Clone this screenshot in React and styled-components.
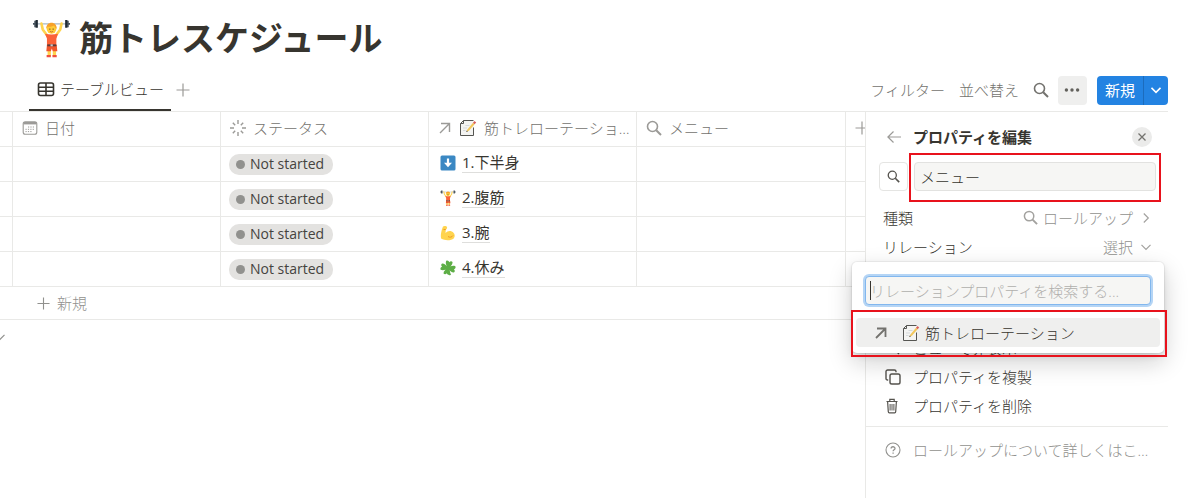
import { useState } from "react";
import styled, { createGlobalStyle, css } from "styled-components";

const tasks = [
  { id: 1, icon: "down", name: "1.下半身" },
  { id: 2, icon: "lifter", name: "2.腹筋" },
  { id: 3, icon: "muscle", name: "3.腕" },
  { id: 4, icon: "clover", name: "4.休み" },
];

/* ---------- icons ---------- */

const Line = ({ size = 16, box = 16, width = 1.3, children }) => (
  <svg
    width={size}
    height={size}
    viewBox={`0 0 ${box} ${box}`}
    fill="none"
    stroke="currentColor"
    strokeWidth={width}
    aria-hidden="true"
  >
    {children}
  </svg>
);

const SearchIcon = ({ size = 16, width = 1.6 }) => (
  <Line size={size} width={width}>
    <circle cx="6.5" cy="6.5" r="5" />
    <path d="M10.2 10.2L15 15" strokeWidth={width + 0.4} />
  </Line>
);

const PlusIcon = ({ size = 14 }) => (
  <Line size={size} box={14} width={1.2}>
    <path d="M7 .5v13M.5 7h13" />
  </Line>
);

const TableIcon = () => (
  <Line size={18} box={18} width={1.6}>
    <rect x="1.5" y="3" width="15" height="12.5" rx="2" />
    <path d="M1.5 7.200h15M1.5 11.300h15M9 3v12.500" />
  </Line>
);

const CalendarIcon = () => (
  <Line width={1.1}>
    <rect x="1.2" y="1.7" width="13.6" height="12.6" rx="2" />
    <path d="M1.500 3.200h13" strokeWidth="2.400" />
    <path
      d="M6 7h7M3.500 9.300h9.500M3.500 11.600h7"
      strokeWidth="1"
      strokeDasharray="1.200 1.200"
    />
  </Line>
);

const StatusIcon = () => (
  <Line width={1.4}>
    <path d="M8 0v4M8 12v4M0 8h4M12 8h4M2.8 2.8l2.4 2.4M10.8 10.8l2.4 2.4M13.2 2.8l-2.4 2.4M5.2 10.8l-2.4 2.4" />
  </Line>
);

const ArrowUpRight = ({ width = 1.4 }) => (
  <Line size={14} box={14} width={width}>
    <path d="M2 12L11.500 2.500M3 2.500h8.500V11" />
  </Line>
);

const ArrowLeft = () => (
  <Line size={14} box={14} width={1.2}>
    <path d="M.7 7H14M6.500 1.500L.9 7l5.600 5.500" />
  </Line>
);

const Chevron = ({ dir = "down", width = 1.2, size = 10 }) => (
  <Line size={size} box={10} width={width}>
    <path d={dir === "down" ? "M.5 2.8L5 7.3l4.5-4.5" : "M2.8.5L7.3 5 2.8 9.5"} />
  </Line>
);

const CloseIcon = () => (
  <Line size={8} box={8} width={1.3}>
    <path d="M.5.5l7 7M7.5.5l-7 7" />
  </Line>
);

const DotsIcon = () => (
  <svg width="16" height="4" viewBox="0 0 16 4" fill="currentColor">
    <circle cx="2.4" cy="2" r="1.7" />
    <circle cx="8" cy="2" r="1.7" />
    <circle cx="13.6" cy="2" r="1.7" />
  </svg>
);

const EyeOffIcon = () => (
  <Line width={1.4}>
    <path d="M1 8c3-5 11-5 14 0-3 5-11 5-14 0zM2 2l12 12" />
    <circle cx="8" cy="8" r="2" />
  </Line>
);

const CopyIcon = () => (
  <Line width={1.4}>
    <rect x="5" y="5" width="10" height="10" rx="1.8" />
    <path d="M3.200 11H2.600A1.600 1.600 0 0 1 1 9.400V2.600A1.600 1.600 0 0 1 2.600 1h6.800A1.600 1.600 0 0 1 11 2.600v.7" />
  </Line>
);

const TrashIcon = () => (
  <Line width={1.2}>
    <path d="M1.500 3.500h11M4.800 3.300V1.300h4.400v2M2.600 3.500l.7 10.300q.1 1 1 1h5.400q.9 0 1-1l.7-10.300" />
    <path d="M5.100 6v6.500M7 6v6.500M8.900 6v6.500" strokeWidth="1" />
  </Line>
);

const HelpIcon = () => (
  <Line width={1.1}>
    <circle cx="8" cy="8" r="7" />
    <path
      d="M6.100 6.600c0-2.500 3.900-2.400 3.900-.2 0 1.400-1.900 1.400-1.900 2.900M8.100 10.400v1.300"
      strokeWidth="1.300"
    />
  </Line>
);

const Lifter = ({ size }) => (
  <svg width={size} height={size} viewBox="0 0 114 120">
    <path d="M8 15h98" stroke="#a9b8c4" strokeWidth="4" />
    <path d="M4 5h5v20H4zM105 5h5v20h-5z" fill="#45515c" />
    <path d="M8 3h7v24H8zM99 3h7v24h-7z" fill="#202b35" />
    <path d="M0 12h6v6H0zM108 12h6v6h-6z" fill="#45515c" />
    <path
      d="M26 14l4 18 16 22M88 14l-4 18-16 22"
      stroke="#ffd44e"
      strokeWidth="8"
      strokeLinecap="round"
      strokeLinejoin="round"
      fill="none"
    />
    <path d="M45 90h10v24H45zM61 90h10v24H61z" fill="#ffd44e" />
    <path d="M37 45q20 5 40 0l-5 16v22H43V60z" fill="#fb6238" />
    <path d="M43 80h30l2 19H61l-3-8-3 8H41z" fill="#f0552c" />
    <path d="M44 78h28v6H44z" fill="#5a3b3b" />
    <path d="M54 78h7v6h-7z" fill="#c9ccd0" />
    <path d="M42 118v-7h13v7zM60 118v-7h13v7z" fill="#f0503c" />
    <circle cx="57" cy="30" r="15" fill="#ffcb38" />
    <path d="M41 30c-2-25 34-25 32 0-5-3-7-9-8-10-7 5-16 3-20 4-2 2-2 4-4 6z" fill="#f7a12a" />
    <circle cx="52" cy="31" r="2" fill="#5b3a1c" />
    <circle cx="62" cy="31" r="2" fill="#5b3a1c" />
    <path d="M52 38q5 4 10 0" stroke="#a6521b" strokeWidth="2" fill="none" />
  </svg>
);

const Memo = () => (
  <svg width="18" height="18" viewBox="0 0 18 18">
    <path d="M1.500 4.500l3-3h10v15h-13z" fill="#f4f4f2" />
    <path d="M4.500 1.500h10M14.500 8.500v8h-13V4.500l3-3v3h-3" fill="none" stroke="#555552" />
    <path d="M6.500 6.500h4M4 9h4M4 11.500h2.500" stroke="#d5d9dc" />
    <path d="M7.500 12.800l.9-2.400 5.600-6.700 1.600 1.500-5.700 6.600z" fill="#f2c75c" />
    <path d="M14 3.700l1.500-1.800 1.700 1.500-1.600 1.800z" fill="#d9605a" />
    <path d="M7.300 13l.5-1.500 1 1z" fill="#333" />
  </svg>
);

const DownSquare = () => (
  <svg width="16" height="16" viewBox="0 0 16 16">
    <rect x=".5" y=".5" width="15" height="15" rx="1.500" fill="#3b88c3" />
    <path d="M6.900 3.500h2.200v4.300H12L8 12.300 4 7.800h2.900z" fill="#fff" />
  </svg>
);

const Muscle = () => (
  <svg width="16" height="16" viewBox="0 0 16 16">
    <path
      d="M3 1.500C4 .6 6.500.8 7 2c.4 1.200-.2 2.200-1.200 2.500L5.500 8c1.600-1.700 4-2.500 6.200-1.500 3.300 1.400 3.800 5 2 6.900C11.500 15.600 5 15.800 1.300 13.800.2 11 1.400 5 3 1.500z"
      fill="#ffd44e"
    />
    <path d="M8 11.500c1.500 1.200 4 .8 5-1M3.500 4.600l2.200-.1" stroke="#ee9a25" fill="none" />
  </svg>
);

const Clover = () => (
  <svg width="16" height="16" viewBox="0 0 16 16">
    <path d="M8 8c0 3 .8 5 2.300 7.200" stroke="#4c9a35" strokeWidth="1.500" fill="none" />
    <path
      d="M8 8C5.500 6 4.200 3.500 4.800 1.200 6 .2 7.300.8 8 2c.7-1.200 2-1.800 3.200-.8C11.800 3.500 10.500 6 8 8zM8 8c2-2.500 4.500-3.800 6.800-3.200 1 1.200.4 2.500-.8 3.200 1.200.7 1.800 2 .8 3.200C12.500 11.800 10 10.500 8 8zM8 8c2.500 2 3.800 4.500 3.200 6.300-1.200.8-2.500.2-3.200-.9-.7 1.100-2 1.700-3.200.9C4.200 12.500 5.500 10 8 8zM8 8c-2 2.500-4.500 3.800-6.800 3.200C.2 10 .8 8.700 2 8 .8 7.300.2 6 1.200 4.800 3.500 4.200 6 5.500 8 8z"
      fill="#5dae46"
      transform="rotate(12 8 8)"
    />
  </svg>
);

const pageIcons = {
  down: <DownSquare />,
  lifter: <Lifter size={16} />,
  muscle: <Muscle />,
  clover: <Clover />,
};

/* ---------- page ---------- */

function App() {
  const [name, setName] = useState("メニュー");
  const [query, setQuery] = useState("");

  return (
    <Page>
      <GlobalStyle />
      <Title>
        <Lifter size={39} />
        筋トレスケジュール
      </Title>

      <Toolbar>
        <Tab>
          <TableIcon />
          テーブルビュー
        </Tab>
        <IconButton aria-label="ビューを追加">
          <PlusIcon />
        </IconButton>
        <Actions>
          <TextButton>フィルター</TextButton>
          <TextButton>並べ替え</TextButton>
          <IconButton aria-label="検索" $dark>
            <SearchIcon />
          </IconButton>
          <MoreButton aria-label="その他">
            <DotsIcon />
          </MoreButton>
          <NewGroup>
            <NewButton>新規</NewButton>
            <NewMenu aria-label="新規メニュー">
              <Chevron width={1.6} />
            </NewMenu>
          </NewGroup>
        </Actions>
      </Toolbar>

      <Content>
        <TableArea>
          <Table>
            <colgroup>
              <col width="13" />
              <col width="208" />
              <col width="208" />
              <col width="208" />
              <col width="209" />
              <col />
            </colgroup>
            <thead>
              <tr>
                <Th />
                <Th>
                  <Head>
                    <CalendarIcon />
                    <span>日付</span>
                  </Head>
                </Th>
                <Th>
                  <Head>
                    <StatusIcon />
                    <span>ステータス</span>
                  </Head>
                </Th>
                <Th>
                  <Head>
                    <ArrowUpRight />
                    <Memo />
                    <span>筋トレローテーション</span>
                  </Head>
                </Th>
                <Th>
                  <Head>
                    <SearchIcon />
                    <span>メニュー</span>
                  </Head>
                </Th>
                <Th>
                  <Head>
                    <PlusIcon />
                  </Head>
                </Th>
              </tr>
            </thead>
            <tbody>
              {tasks.map((task) => (
                <tr key={task.id}>
                  <Td />
                  <Td />
                  <Td>
                    <Status>Not started</Status>
                  </Td>
                  <Td>
                    <Relation href="#">
                      {pageIcons[task.icon]}
                      <span>{task.name}</span>
                    </Relation>
                  </Td>
                  <Td />
                  <Td />
                </tr>
              ))}
            </tbody>
          </Table>
          <AddRow>
            <PlusIcon size={13} />
            新規
          </AddRow>
          <Calc>
            <Chevron />
          </Calc>
        </TableArea>

        <Panel>
          <PanelHeader>
            <IconButton aria-label="戻る">
              <ArrowLeft />
            </IconButton>
            <h2>プロパティを編集</h2>
            <CloseButton aria-label="閉じる">
              <CloseIcon />
            </CloseButton>
          </PanelHeader>
          <NameRow>
            <IconBox aria-label="アイコン">
              <SearchIcon size={13} />
            </IconBox>
            <NameField>
              <NameInput
                aria-label="プロパティ名"
                value={name}
                onChange={(e) => setName(e.target.value)}
              />
              <Highlight />
            </NameField>
          </NameRow>
          <Setting>
            種類
            <Value>
              <SearchIcon size={15} />
              ロールアップ
              <Chevron dir="right" />
            </Value>
          </Setting>
          <Setting>
            リレーション
            <Value>
              選択
              <Chevron />
            </Value>
            <Popup>
              <Query
                aria-label="リレーションプロパティを検索"
                placeholder="リレーションプロパティを検索する..."
                value={query}
                autoFocus
                onChange={(e) => setQuery(e.target.value)}
              />
              <Option>
                <ArrowUpRight width={1.8} />
                <Memo />
                筋トレローテーション
              </Option>
              <OptionHighlight />
            </Popup>
          </Setting>
          <Menu>
            <MenuItem>
              <EyeOffIcon />
              <span>ビューで非表示</span>
            </MenuItem>
            <MenuItem>
              <CopyIcon />
              <span>プロパティを複製</span>
            </MenuItem>
            <MenuItem>
              <TrashIcon />
              <span>プロパティを削除</span>
            </MenuItem>
          </Menu>
          <Help>
            <MenuItem $muted>
              <HelpIcon />
              <span>ロールアップについて詳しくはこちら</span>
            </MenuItem>
          </Help>
        </Panel>
      </Content>
    </Page>
  );
}

export default App;

const GlobalStyle = createGlobalStyle`
  * {
    box-sizing: border-box;
  }
  body {
    margin: 0;
    background: #fff;
    color: #37352f;
    font-family: "Open Sans", "Noto Sans CJK JP", sans-serif;
    font-size: 15px;
    font-weight: 300;
    line-height: 20px;
  }
  button, input {
    font: inherit;
    color: inherit;
  }
  button {
    display: flex;
    align-items: center;
    padding: 0;
    border: none;
    background: none;
    cursor: pointer;
  }
  svg {
    flex-shrink: 0;
  }
`;

const Page = styled.div`
  min-height: 100vh;
  display: flex;
  flex-direction: column;
  overflow: hidden;
`;

const Title = styled.h1`
  display: flex;
  align-items: center;
  gap: 8px;
  margin: 0;
  padding: 16px 32px 0;
  font-size: 34px;
  font-weight: 700;
  line-height: 44px;
`;

const Toolbar = styled.div`
  display: flex;
  align-items: center;
  gap: 5px;
  height: 42px;
  margin-top: 9px;
  padding: 0 32px 0 29px;
`;

const Tab = styled.button`
  align-self: stretch;
  gap: 5px;
  padding: 0 7px 0 8px;
  border-bottom: 2px solid #37352f;
`;

const IconButton = styled.button`
  color: ${(p) => (p.$dark ? "#73726e" : "#9b9a97")};
`;

const Actions = styled.div`
  display: flex;
  align-items: center;
  gap: 14px;
  margin-left: auto;
`;

const TextButton = styled.button`
  color: #73726e;
`;

const MoreButton = styled.button`
  justify-content: center;
  width: 29px;
  height: 29px;
  margin: 0 -4px 0 -5px;
  border-radius: 4px;
  background: #efefee;
  color: #62615c;
`;

const NewGroup = styled.div`
  display: flex;
  height: 29px;
  overflow: hidden;
  border-radius: 4px;
  background: #2383e2;
  color: #fff;
`;

const NewButton = styled.button`
  padding: 0 8px;
  font-weight: 400;
`;

const NewMenu = styled.button`
  justify-content: center;
  width: 25px;
  border-left: 1px solid #1c6cbc;
`;

const Content = styled.div`
  flex: 1;
  display: flex;
  margin-right: 32px;
  border-top: 1px solid #e9e9e7;
`;

const TableArea = styled.div`
  flex: 1;
  min-width: 0;
  overflow: hidden;
`;

const Table = styled.table`
  width: 100%;
  table-layout: fixed;
  border-collapse: separate;
  border-spacing: 0;
`;

const cell = css`
  height: 35px;
  padding: 0 5px 0 8px;
  border-bottom: 1px solid #e9e9e7;
  border-right: 1px solid #e9e9e7;
  &:first-child {
    padding: 0;
  }
  &:last-child {
    padding-right: 0;
    border-right: none;
  }
`;

const Th = styled.th`
  ${cell}
  color: #73726e;
  font-weight: inherit;
  text-align: left;
  svg {
    color: #9b9a97;
  }
`;

const Head = styled.div`
  display: flex;
  align-items: center;
  gap: 7px;
  padding: 0 0 2px 1px;
  span {
    overflow: hidden;
    text-overflow: ellipsis;
    white-space: nowrap;
  }
`;

const Td = styled.td`
  ${cell}
`;

const Status = styled.span`
  display: flex;
  align-items: center;
  gap: 5px;
  width: fit-content;
  height: 21px;
  padding: 0 9px 0 7px;
  border-radius: 10px;
  background: #e3e2e0;
  color: #45433e;
  font-size: 14px;
  font-weight: 400;
  &::before {
    content: "";
    width: 9px;
    height: 9px;
    border-radius: 50%;
    background: #91918e;
  }
`;

const Relation = styled.a`
  display: flex;
  align-items: center;
  gap: 6px;
  padding: 0 0 3px 3px;
  color: inherit;
  font-weight: 400;
  text-decoration: none;
  span {
    border-bottom: 1px solid #dededc;
  }
`;

const AddRow = styled.button`
  gap: 7px;
  width: 100%;
  height: 33px;
  padding-left: 37px;
  border-bottom: 1px solid #e9e9e7;
  color: #91918e;
`;

const Calc = styled.div`
  margin: 6px 0 0 -5px;
  color: #91918e;
`;

const Panel = styled.aside`
  width: 303px;
  border-left: 1px solid #e9e9e7;
`;

const PanelHeader = styled.div`
  display: flex;
  align-items: center;
  gap: 12px;
  padding: 15px 16px 0 21px;
  h2 {
    flex: 1;
    margin: 0;
    font-size: 15px;
    font-weight: 700;
    line-height: 20px;
  }
`;

const CloseButton = styled.button`
  justify-content: center;
  width: 20px;
  height: 20px;
  border-radius: 50%;
  background: #ebebea;
  color: #73726e;
`;

const NameRow = styled.div`
  display: flex;
  gap: 6px;
  padding: 15px 12px 12px 13px;
`;

const IconBox = styled.button`
  justify-content: center;
  width: 29px;
  height: 29px;
  border: 1px solid #e5e5e3;
  border-radius: 4px;
  color: #55534e;
`;

const NameField = styled.div`
  position: relative;
  flex: 1;
`;

const NameInput = styled.input`
  display: block;
  width: 100%;
  height: 29px;
  padding: 0 5px;
  border: 1px solid #e2e2e0;
  border-radius: 4px;
  background: #f6f6f4;
  outline: none;
`;

const Highlight = styled.div`
  position: absolute;
  inset: -9px -5px -11px;
  border: 2px solid #e8121c;
  pointer-events: none;
`;

const Setting = styled.div`
  position: relative;
  display: flex;
  align-items: center;
  justify-content: space-between;
  height: 29px;
  padding: 0 17px;
`;

const Value = styled.button`
  gap: 5px;
  color: #91918e;
  svg {
    color: #a3a29f;
  }
  svg:last-child {
    margin-left: 3px;
  }
`;

const Popup = styled.div`
  position: absolute;
  top: 30px;
  left: -14px;
  right: 4px;
  z-index: 1;
  padding: 14px 4px 6px;
  border-radius: 5px;
  background: #fff;
  box-shadow: 0 0 0 1px rgba(15, 15, 15, 0.05), 0 3px 6px rgba(15, 15, 15, 0.1),
    0 9px 24px rgba(15, 15, 15, 0.2);
`;

/* the caret is drawn as a background so it does not blink */
const Query = styled.input`
  display: block;
  width: calc(100% - 18px);
  height: 29px;
  margin: 0 9px 13px;
  padding: 0 4px;
  border: 1px solid #82b7ee;
  border-radius: 4px;
  background: #f6f6f4;
  box-shadow: 0 0 0 2px #b5d5f5;
  outline: none;
  &::placeholder {
    color: #b0afac;
  }
  &:placeholder-shown {
    caret-color: transparent;
    background: linear-gradient(#37352f, #37352f) 4px center / 1px 19px
      no-repeat #f6f6f4;
  }
`;

const Option = styled.button`
  gap: 5px;
  width: 100%;
  height: 29px;
  padding-left: 18px;
  border-radius: 4px;
  background: #efefee;
  svg:first-child {
    margin-right: 9px;
    color: #73726e;
  }
`;

const OptionHighlight = styled.div`
  position: absolute;
  right: -3px;
  bottom: -4px;
  left: -1px;
  height: 47px;
  border: 2px solid #e8121c;
  pointer-events: none;
`;

const Menu = styled.div`
  padding: 72px 0 6px;
  border-bottom: 1px solid #e9e9e7;
`;

const MenuItem = styled.button`
  gap: 12px;
  width: 100%;
  height: 29px;
  padding: 0 16px 0 19px;
  color: ${(p) => (p.$muted ? "#91918e" : "inherit")};
  svg {
    color: ${(p) => (p.$muted ? "inherit" : "#55534e")};
  }
  span {
    overflow: hidden;
    text-overflow: ellipsis;
    white-space: nowrap;
  }
`;

const Help = styled.div`
  padding: 8px 0;
`;
